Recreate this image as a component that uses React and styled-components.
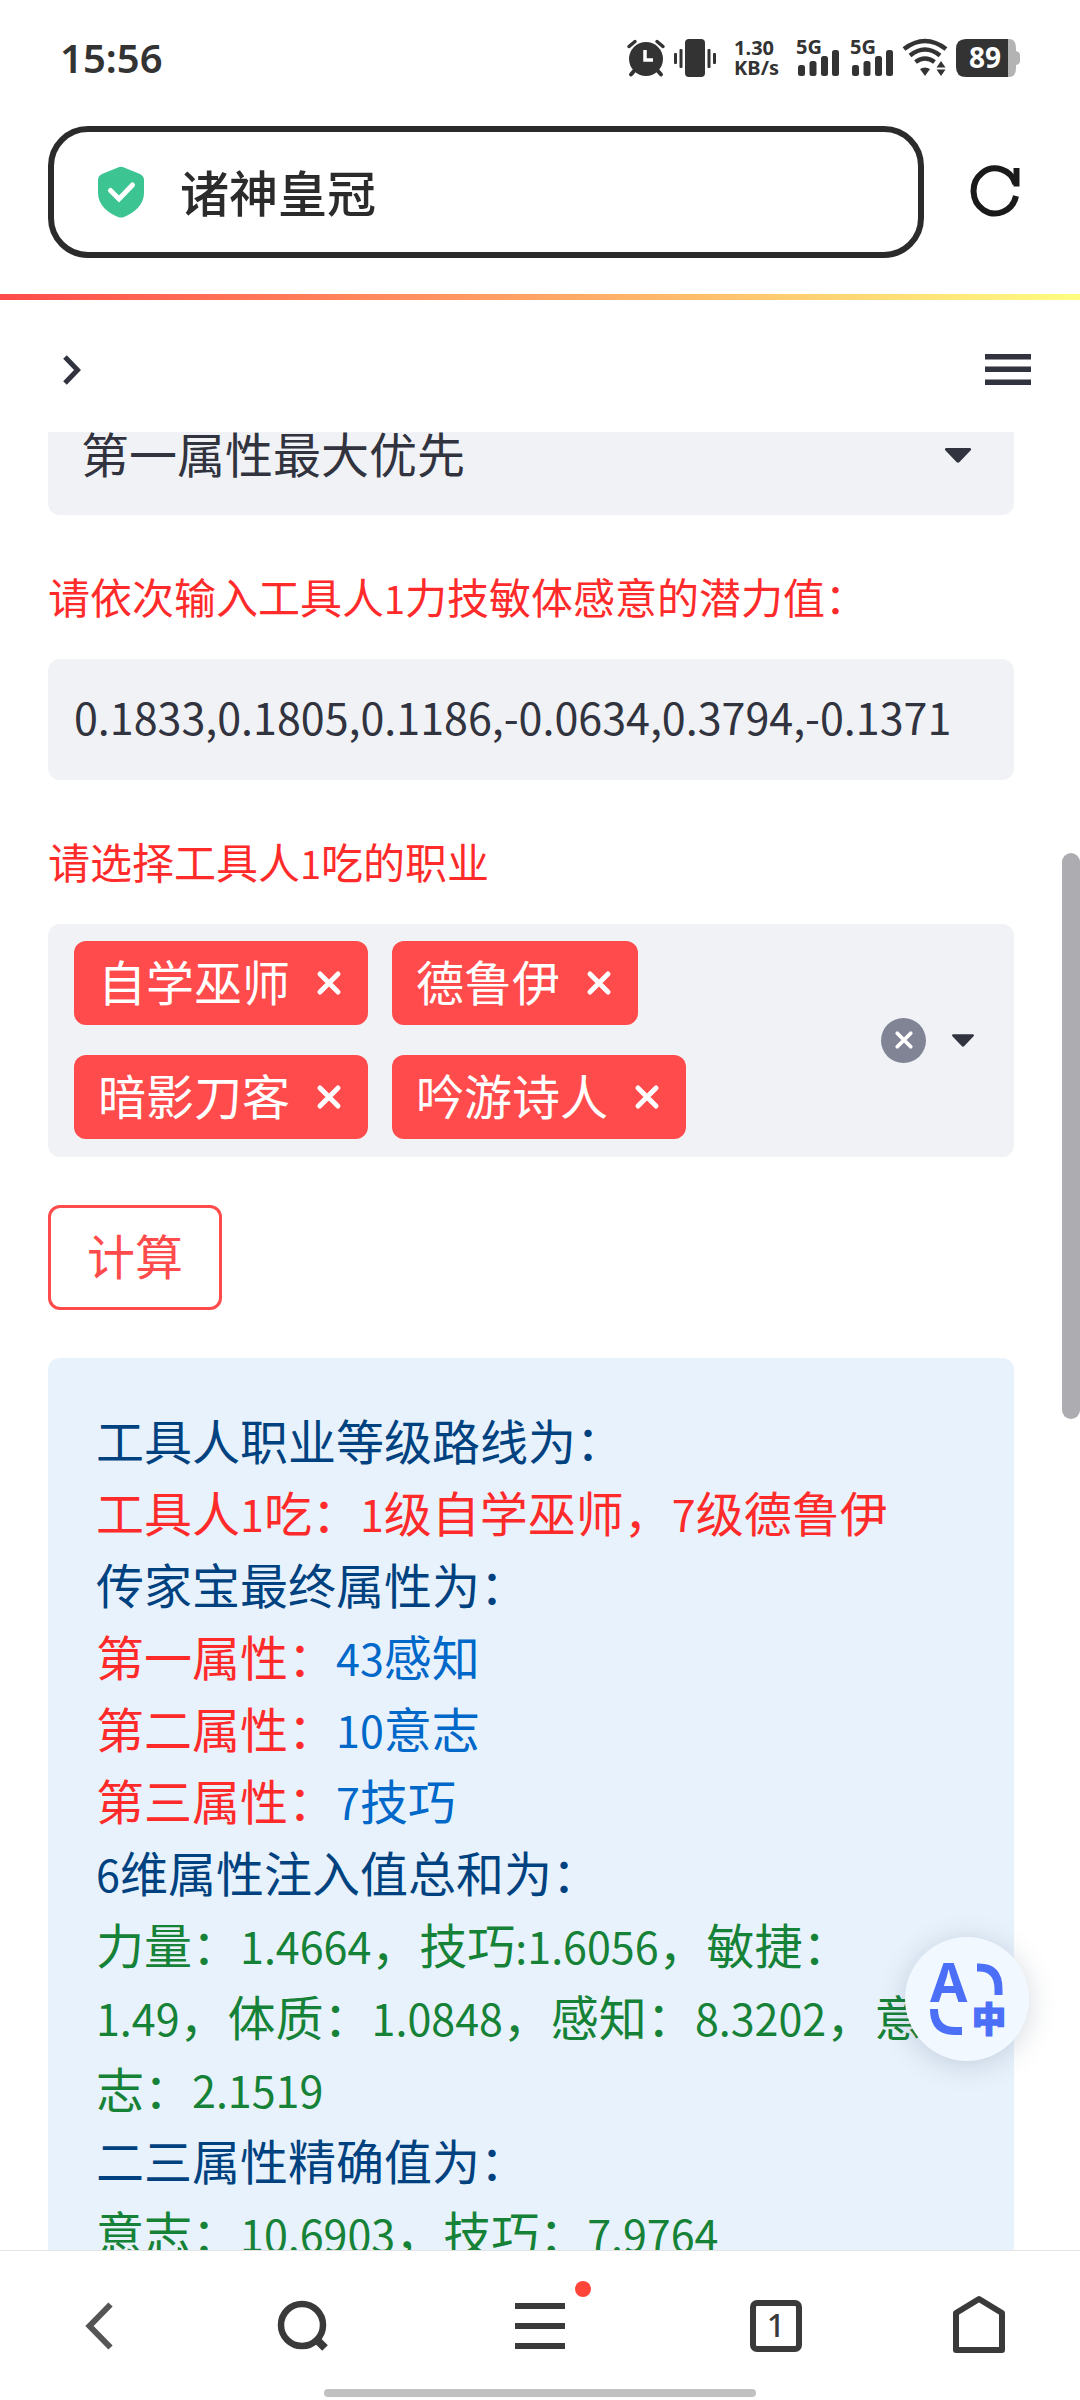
import React, { useLayoutEffect, useRef, useState } from 'react';
import styled, { createGlobalStyle } from 'styled-components';

const JOBS = ['自学巫师', '德鲁伊', '暗影刀客', '吟游诗人'];

const RESULT = [
    [{ tone: 'navy', text: '工具人职业等级路线为：' }],
    [{ tone: 'red', text: '工具人1吃：1级自学巫师，7级德鲁伊' }],
    [{ tone: 'navy', text: '传家宝最终属性为：' }],
    [{ tone: 'red', text: '第一属性：' }, { tone: 'blue', text: '43感知' }],
    [{ tone: 'red', text: '第二属性：' }, { tone: 'blue', text: '10意志' }],
    [{ tone: 'red', text: '第三属性：' }, { tone: 'blue', text: '7技巧' }],
    [{ tone: 'navy', text: '6维属性注入值总和为：' }],
    [{ tone: 'green', text: '力量：1.4664，技巧:1.6056，敏捷：1.49，体质：1.0848，感知：8.3202，意志：2.1519' }],
    [{ tone: 'navy', text: '二三属性精确值为：' }],
    [{ tone: 'green', text: '意志：10.6903，技巧：7.9764' }],
];

const TONES = {
    navy: '#004280',
    red: '#ff2b2b',
    blue: '#0068c9',
    green: '#158237',
};

// Latin runs are set one step smaller than the Chinese around them
const Mixed = ({ children }) =>
    children.split(/([!-~]+)/).map((part, i) => (i % 2 ? <Latin key={i}>{part}</Latin> : part));

const AlarmIcon = () => (
    <svg width="38" height="38" viewBox="0 0 38 38" fill="none" stroke="#333" strokeLinecap="round">
        <circle cx="19" cy="20" r="17" fill="#333" stroke="none" />
        <path d="M2 7.500L8 2.500M36 7.500L30 2.500" strokeWidth="3.500" />
        <path d="M7 32L4 35.500M31 32L34 35.500" strokeWidth="4" />
        <path d="M18 11V21H26" stroke="#fff" strokeWidth="3.500" strokeLinecap="butt" />
    </svg>
);

const VibrateIcon = () => (
    <svg width="42" height="38" viewBox="0 0 42 38" fill="#333">
        <rect x="11" y="0" width="20" height="38" rx="4" />
        <rect x="5.500" y="10" width="3" height="19" rx="1" />
        <rect x="0" y="14" width="3" height="11" rx="1" />
        <rect x="33.500" y="10" width="3" height="19" rx="1" />
        <rect x="39" y="14" width="3" height="11" rx="1" />
    </svg>
);

const SignalIcon = () => (
    <svg width="44" height="38" viewBox="0 0 44 38" fill="#333">
        <text x="0" y="15" fontSize="20" fontWeight="700">5G</text>
        <rect x="2" y="26" width="7" height="11" rx="2.500" />
        <rect x="13.500" y="22" width="7" height="15" rx="2.500" />
        <rect x="25" y="17" width="7" height="20" rx="2.500" />
        <rect x="36" y="11" width="7" height="26" rx="2.500" />
    </svg>
);

const WifiIcon = () => (
    <svg width="44" height="38" viewBox="0 0 44 38" fill="none" stroke="#333" strokeWidth="4.500">
        <path d="M1 10Q22 -6 43 10" />
        <path d="M7 16.500Q22 4.500 37 16.500" />
        <path d="M12.500 23Q22 16 31.500 23" />
        <path d="M17 30Q22 27 27 30L22 37Z" fill="#333" stroke="none" />
        <path d="M38 22L42.500 28.500H33.500ZM38 37L42.500 30.500H33.500Z" fill="#333" stroke="none" />
    </svg>
);

const BatteryIcon = () => (
    <svg width="64" height="38" viewBox="0 0 64 38">
        <path d="M52 0H53Q60 0 60 9V12Q64 13 64 16V22Q64 25 60 26V29Q60 38 53 38H52Z" fill="#b3b3b3" />
        <path d="M10 0H52V38H10Q0 38 0 28V10Q0 0 10 0Z" fill="#333" />
        <text x="29" y="29" fontSize="28" fontWeight="700" fill="#fff" textAnchor="middle">89</text>
    </svg>
);

const ShieldIcon = () => (
    <svg width="46" height="52" viewBox="0 0 46 52">
        <path
            d="M20 1.500Q23 0 26 1.500L42 8Q46 10 46 14V27C46 39 36 47 26 51Q23 52 20 51C10 47 0 39 0 27V14Q0 10 4 8Z"
            fill="#3cc493"
        />
        <path d="M12.500 24.500L21 33L34.500 19" fill="none" stroke="#fff" strokeWidth="5" strokeLinecap="round" />
    </svg>
);

const ReloadIcon = () => (
    <svg width="50" height="52" viewBox="0 0 50 52" fill="none" stroke="#1a1a1a" strokeWidth="6">
        <path d="M45.500 18A21.500 22.500 0 1 0 46 30" />
        <path d="M46.500 2V20.500" />
    </svg>
);

const CrossIcon = ({ size, width }) => (
    <svg width={size} height={size} viewBox="0 0 24 24" fill="none" stroke="#fff" strokeWidth={width} strokeLinecap="round">
        <path d="M3 3L21 21M21 3L3 21" />
    </svg>
);

const ArrowIcon = ({ width, height }) => (
    <svg width={width} height={height} viewBox="0 0 26 15">
        <path d="M1 0H25Q27 1 25.500 2.500L14.500 14Q13 15.500 11.500 14L0.500 2.500Q-1 1 1 0Z" fill="#31333f" />
    </svg>
);

const TranslateIcon = () => (
    <svg width="76" height="76" viewBox="0 0 76 76" fill="none" stroke="#4c6ff8" strokeWidth="8">
        <text x="1" y="41" fontSize="54" fontWeight="700" fill="#4c6ff8" stroke="none">A</text>
        <path d="M48 6.500H50Q69.500 6.500 69.500 28V34" />
        <path d="M5 48Q5 70 26 70H33" />
        <text x="43" y="71" fontSize="34" fontWeight="900" fill="#4c6ff8" strokeWidth="1.500">中</text>
    </svg>
);

export default function App() {
    const [jobs, setJobs] = useState(JOBS);
    const [potential, setPotential] = useState('0.1833,0.1805,0.1186,-0.0634,0.3794,-0.1371');
    const viewRef = useRef(null);

    // open slightly scrolled, so the first field slides under the toolbar
    useLayoutEffect(() => {
        viewRef.current.scrollTop = 37;
    }, []);

    return (
        <Shell lang="zh-CN">
            <GlobalStyle />
            <StatusBar>
                <Clock>15:56</Clock>
                <StatusIcons>
                    <AlarmIcon />
                    <VibrateIcon />
                    <Speed>
                        <span>1.30</span>
                        <span>KB/s</span>
                    </Speed>
                    <SignalGroup>
                        <SignalIcon />
                        <SignalIcon />
                    </SignalGroup>
                    <WifiIcon />
                    <BatteryIcon />
                </StatusIcons>
            </StatusBar>

            <AddressRow>
                <AddressBar type="button">
                    <ShieldIcon />
                    <PageTitle>诸神皇冠</PageTitle>
                </AddressBar>
                <IconButton type="button" aria-label="刷新">
                    <ReloadIcon />
                </IconButton>
            </AddressRow>
            <Decoration />

            <Toolbar>
                <IconButton type="button" aria-label="展开侧栏">
                    <svg width="20" height="32" viewBox="0 0 20 32" fill="none" stroke="#31333f" strokeWidth="5">
                        <path d="M3 3L15.500 16L3 29" />
                    </svg>
                </IconButton>
                <IconButton type="button" aria-label="菜单">
                    <svg width="46" height="32" viewBox="0 0 46 32" fill="#31333f">
                        <path d="M0 0H46V5.500H0ZM0 12.500H46V18H0ZM0 25.500H46V31H0Z" />
                    </svg>
                </IconButton>
            </Toolbar>

            <Main>
                <View ref={viewRef}>
                    <SelectBox>
                        <Select aria-label="优先方式" defaultValue="max">
                            <option value="max">第一属性最大优先</option>
                        </Select>
                        <ArrowIcon width={26} height={15} />
                    </SelectBox>

                    <Field>
                        <Label htmlFor="potential">
                            <Mixed>请依次输入工具人1力技敏体感意的潜力值：</Mixed>
                        </Label>
                        <Input id="potential" value={potential} onChange={(e) => setPotential(e.target.value)} />
                    </Field>

                    <Field>
                        <Label as="div" id="jobs-label">
                            <Mixed>请选择工具人1吃的职业</Mixed>
                        </Label>
                        <MultiSelect role="group" aria-labelledby="jobs-label">
                            <Tags>
                                {jobs.map((job) => (
                                    <Tag key={job}>
                                        {job}
                                        <RemoveButton
                                            type="button"
                                            aria-label={`移除${job}`}
                                            onClick={() => setJobs(jobs.filter((j) => j !== job))}
                                        >
                                            <CrossIcon size={24} width={5} />
                                        </RemoveButton>
                                    </Tag>
                                ))}
                            </Tags>
                            <ClearButton type="button" aria-label="清空" onClick={() => setJobs([])}>
                                <CrossIcon size={18} width={5} />
                            </ClearButton>
                            <IconButton type="button" aria-label="展开">
                                <ArrowIcon width={22} height={13} />
                            </IconButton>
                        </MultiSelect>
                    </Field>

                    <CalcButton type="button">计算</CalcButton>

                    <Result>
                        {RESULT.map((line, i) => (
                            <Line key={i}>
                                {line.map(({ tone, text }) => (
                                    <Tone key={text} $tone={tone}>
                                        <Mixed>{text}</Mixed>
                                    </Tone>
                                ))}
                            </Line>
                        ))}
                    </Result>
                </View>
                <Track>
                    <Thumb />
                </Track>
                <TranslateButton type="button" aria-label="翻译">
                    <TranslateIcon />
                </TranslateButton>
            </Main>

            <BottomBar>
                <Nav>
                    <IconButton type="button" aria-label="后退">
                        <svg width="28" height="48" viewBox="0 0 28 48" fill="none" stroke="#555" strokeWidth="6">
                            <path d="M25.500 2.500L4.500 24L25.500 45.500" />
                        </svg>
                    </IconButton>
                    <IconButton type="button" aria-label="搜索">
                        <svg width="52" height="52" viewBox="0 0 52 52" fill="none" stroke="#3a3a3a" strokeWidth="6.500">
                            <circle cx="26" cy="25" r="21" />
                            <path d="M41 40L49 48" strokeWidth="8" />
                        </svg>
                    </IconButton>
                    <IconButton type="button" aria-label="主菜单">
                        <svg width="50" height="46" viewBox="0 0 50 46" fill="#3a3a3a">
                            <path d="M0 0H50V6H0ZM0 20H50V26H0ZM0 40H50V46H0Z" />
                        </svg>
                        <Dot />
                    </IconButton>
                    <IconButton type="button" aria-label="标签页">
                        <TabCount>1</TabCount>
                    </IconButton>
                    <IconButton type="button" aria-label="主页">
                        <svg width="52" height="66" viewBox="0 0 52 66" fill="none" stroke="#3a3a3a" strokeWidth="6" strokeLinejoin="round">
                            <path d="M26 6L49 20V57H3V20Z" />
                        </svg>
                    </IconButton>
                </Nav>
                <Gesture />
            </BottomBar>
        </Shell>
    );
}

const GlobalStyle = createGlobalStyle`
    * {
        box-sizing: border-box;
    }

    body {
        margin: 0;
        background: #fff;
    }

    button, input, select {
        font-family: inherit;
        color: inherit;
    }

    svg {
        display: block;
        flex-shrink: 0;
        overflow: visible;
    }
`;

const Shell = styled.div`
    display: flex;
    flex-direction: column;
    height: 100vh;
    color: #31333f;
    background: #fff;
    font-family: 'Noto Sans CJK SC', 'Noto Sans', sans-serif;
    font-size: 48px;
`;

const StatusBar = styled.div`
    display: flex;
    align-items: center;
    justify-content: space-between;
    height: 116px;
    padding: 0 60px;
    color: #333;
    font-family: 'Noto Sans', 'Noto Sans CJK SC', sans-serif;
`;

const Clock = styled.span`
    font-size: 40px;
    font-weight: 600;
    line-height: 56px;
`;

const StatusIcons = styled.div`
    display: flex;
    align-items: center;
    gap: 9px;
`;

const Speed = styled.div`
    display: flex;
    flex-direction: column;
    padding: 0 8px 0 9px;
    font-size: 20px;
    font-weight: 700;
    line-height: 20px;
`;

const SignalGroup = styled.div`
    display: flex;
    gap: 10px;
`;

const AddressRow = styled.div`
    display: flex;
    align-items: center;
    gap: 46px;
    padding: 10px 60px 36px 48px;
`;

const AddressBar = styled.button`
    display: flex;
    flex: 1;
    align-items: center;
    gap: 36px;
    height: 132px;
    padding: 0 44px;
    border: 6px solid #2b2b2b;
    border-radius: 40px;
    background: #fff;
    color: #2b2b2b;
`;

const PageTitle = styled.span`
    padding-bottom: 4px;
    font-size: 49px;
    font-weight: 500;
`;

const IconButton = styled.button`
    position: relative;
    display: flex;
    align-items: center;
    justify-content: center;
    padding: 0;
    border: 0;
    background: none;
    cursor: pointer;
`;

const Decoration = styled.div`
    flex-shrink: 0;
    height: 6px;
    background: linear-gradient(90deg, #ff4b4b, #fffd80);
`;

const Toolbar = styled.header`
    display: flex;
    flex-shrink: 0;
    align-items: center;
    justify-content: space-between;
    height: 132px;
    padding: 8px 49px 0 62px;
`;

const Main = styled.main`
    position: relative;
    display: flex;
    flex: 1;
    min-height: 0;
`;

const View = styled.div`
    flex: 1;
    min-width: 0;
    padding: 0 48px;
    overflow-y: auto;
    scrollbar-width: none;
`;

const SelectBox = styled.div`
    display: grid;
    align-items: center;
    margin-bottom: 48px;

    > * {
        grid-area: 1 / 1;
    }

    svg {
        justify-self: end;
        margin-right: 43px;
        pointer-events: none;
    }
`;

const Select = styled.select`
    width: 100%;
    height: 120px;
    padding: 0 33px 6px;
    border: 0;
    border-radius: 12px;
    appearance: none;
    background: #f0f2f6;
    font-size: 48px;
`;

const Field = styled.div`
    margin-bottom: 48px;
`;

const Latin = styled.span`
    font-size: 43px;
    line-height: 1;
`;

const Label = styled.label`
    display: block;
    margin-bottom: 30px;
    color: #ff2b2b;
    font-size: 42px;
    line-height: 66px;

    ${Latin} {
        font-size: 38px;
    }
`;

const Input = styled.input`
    display: block;
    width: 100%;
    height: 121px;
    padding: 0 26px 8px;
    border: 0;
    border-radius: 12px;
    background: #f0f2f6;
    font-size: 43px;
`;

const MultiSelect = styled.div`
    display: flex;
    align-items: center;
    padding: 17px 40px 18px 26px;
    border-radius: 12px;
    background: #f0f2f6;
`;

const Tags = styled.div`
    display: flex;
    flex: 1;
    flex-wrap: wrap;
    gap: 30px 24px;
`;

const Tag = styled.span`
    display: flex;
    height: 84px;
    padding-left: 24px;
    border-radius: 12px;
    background: #ff4b4b;
    color: #fff;
    line-height: 78px;
`;

const RemoveButton = styled(IconButton)`
    width: 78px;
`;

const ClearButton = styled(IconButton)`
    width: 45px;
    height: 45px;
    margin-right: 26px;
    border-radius: 50%;
    background: #808495;
`;

const CalcButton = styled.button`
    display: block;
    height: 105px;
    margin-bottom: 48px;
    padding: 0 36px 8px;
    border: 3px solid #ff4b4b;
    border-radius: 12px;
    background: #fff;
    font-size: 48px;
    cursor: pointer;

    && {
        color: #ff4b4b;
    }
`;

const Result = styled.section`
    padding: 45px 48px 48px;
    border-radius: 12px;
    background: #e8f2fc;
    line-height: 72px;
`;

const Line = styled.p`
    margin: 0;
`;

const Tone = styled.span`
    color: ${({ $tone }) => TONES[$tone]};
`;

const Track = styled.div`
    flex-shrink: 0;
    width: 18px;
    padding-top: 421px;
`;

const Thumb = styled.div`
    height: 566px;
    border-radius: 9px;
    background: #adadb1;
`;

const TranslateButton = styled.button`
    position: absolute;
    right: 51px;
    bottom: 189px;
    display: flex;
    align-items: center;
    justify-content: center;
    width: 124px;
    height: 124px;
    padding: 0;
    border: 0;
    border-radius: 50%;
    background: #f2f8ff;
    box-shadow: 0 4px 28px rgba(60, 80, 110, 0.22);

    && {
        font-family: 'Noto Sans', 'Noto Sans CJK SC', sans-serif;
    }
`;

const BottomBar = styled.footer`
    display: flex;
    flex-direction: column;
    flex-shrink: 0;
    align-items: center;
    height: 150px;
    border-top: 1px solid #e4e4e4;
    background: #fff;
`;

const Nav = styled.nav`
    display: grid;
    grid-template-columns: 198fr 208fr 268fr 204fr 202fr;
    width: 100%;
    height: 149px;
    margin-bottom: -11px;
`;

const Dot = styled.span`
    position: absolute;
    top: 30px;
    left: calc(50% + 35px);
    width: 16px;
    height: 16px;
    border-radius: 50%;
    background: #ff453a;
`;

const TabCount = styled.span`
    width: 52px;
    height: 52px;
    border: 6px solid #3a3a3a;
    border-radius: 7px;
    color: #3a3a3a;
    font-family: 'Noto Sans', sans-serif;
    font-size: 32px;
    font-weight: 500;
    line-height: 38px;
    text-align: center;
`;

const Gesture = styled.div`
    width: 40%;
    height: 8px;
    border-radius: 4px;
    background: #c1c1c1;
`;
